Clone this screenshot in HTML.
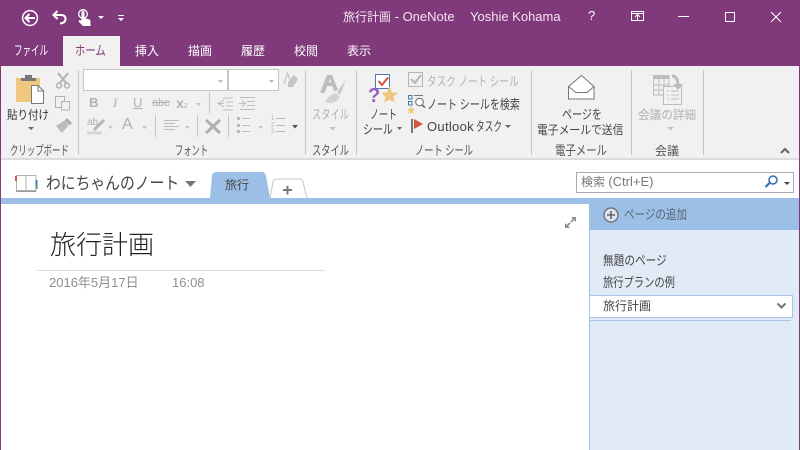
<!DOCTYPE html>
<html lang="ja"><head><meta charset="utf-8"><title>旅行計画 - OneNote</title>
<style>
html,body{margin:0;padding:0;width:800px;height:450px;overflow:hidden;background:#fff}
body{position:relative;font-family:"Liberation Sans","Noto Sans CJK JP",sans-serif;font-size:12px;color:#444}
.a{position:absolute;white-space:nowrap;line-height:16px;transform-origin:0 0}
.k{font-size:13px}
.b{position:absolute}
.w{color:#fff}
.g{color:#b1b1b1}
.tab{top:43px;color:#fff;font-size:12px}
.tab.k{font-size:13px}
.lbl{top:143px;color:#555;font-size:12px}
.lbl.k{font-size:13px}
.sep{position:absolute;top:70px;width:1px;height:85px;background:#c6c6c6}
svg{position:absolute;overflow:visible}
</style></head><body>
<div class="b" style="left:0;top:0;width:800px;height:66px;background:#80397b"></div>
<div class="b" style="left:0;top:66px;width:800px;height:93px;background:#f1f1f1"></div>
<div class="b" style="left:0;top:158px;width:800px;height:2px;background:#dcdcdc"></div>
<div class="b" style="left:0;top:0;width:1px;height:450px;background:#80397b"></div>
<div class="b" style="left:799px;top:0;width:1px;height:450px;background:#80397b"></div>
<div class="b" style="left:63px;top:36px;width:57px;height:30px;background:#f1f1f1"></div>

<svg style="left:0;top:0" width="140" height="36" fill="none" stroke="#fff">
<circle cx="30" cy="18" r="7.400" stroke-width="1.500"/>
<path d="M35 18H26M29.500 14L25.500 18L29.500 22" stroke-width="2"/>
<path d="M54 15H61Q65.500 15 65.500 19Q65.500 23 60 23.500M57.500 11L53.500 15L57.500 19" stroke-width="2"/>
<circle cx="83" cy="14" r="4.300" stroke-width="1.300"/>
<path d="M81.500 11.500Q83 10 84.500 11.500V18L89.500 19.500Q90.500 20 90.500 21.500V26H83L78.500 21.500L79.500 20L81.500 20.500Z" fill="#fff" stroke="none"/>
<path d="M98 16H104L101 19Z M118 15H124V16H118Z M118 18H124L121 21Z" fill="#fff" stroke="none"/>
</svg>

<div class="a" style="left:343px;top:9px;color:#f3e6f1">旅行計画<span style="font-size:13px"> - OneNote</span></div>
<div class="a" style="left:470px;top:9px;font-size:13px;color:#f3e6f1">Yoshie Kohama</div>
<div class="a w" style="left:588px;top:8px;font-size:13px">?</div>
<svg style="left:630px;top:8px" width="170" height="20" fill="none" stroke="#fff">
<path d="M1.500 3.500H13.500V12.500H1.500ZM1.500 5.500H13.500M7.500 12V7M5 9L7.500 6.500L10 9"/>
<path d="M48 8.500H59"/>
<path d="M95.500 4.500H104.500V13.500H95.500Z"/>
<path d="M141 4L151 14M151 4L141 14"/>
</svg>

<div class="a tab k" style="left:14px;transform:scaleX(.655)">ファイル</div>
<div class="a tab k" style="left:75px;color:#80397b;transform:scaleX(.795)">ホーム</div>
<div class="a tab" style="left:135px">挿入</div>
<div class="a tab" style="left:188px">描画</div>
<div class="a tab" style="left:241px">履歴</div>
<div class="a tab" style="left:294px">校閲</div>
<div class="a tab" style="left:347px">表示</div>

<!-- clipboard -->
<svg style="left:0;top:66px" width="110" height="95">
<rect x="16" y="12" width="24" height="24" fill="#efc77f"/>
<path d="M21 15V12H25V9H32V12H36V15Z" fill="#777"/>
<path d="M31.500 19.500H38L43.500 25V37.500H31.500Z" fill="#fff" stroke="#777"/>
<path d="M38 19.500V25H43.500" fill="none" stroke="#777"/>
<path d="M28 61H34L31 64Z" fill="#666"/>
<path d="M58 7L67 18M68 7L59 18" stroke="#b3b3b3" stroke-width="2"/>
<circle cx="59" cy="19.500" r="2.500" fill="none" stroke="#b3b3b3" stroke-width="1.500"/>
<circle cx="67" cy="19.500" r="2.500" fill="none" stroke="#b3b3b3" stroke-width="1.500"/>
<path d="M55.500 30.500H64.500V41.500H55.500Z" fill="#f1f1f1" stroke="#b3b3b3"/>
<path d="M61.500 35.500H69.500V44H61.500Z" fill="#f1f1f1" stroke="#b3b3b3"/>
<path d="M56 60L65 54L69 59L62 67Z" fill="#bdbdbd"/><path d="M66 53L71 58" stroke="#aaa" stroke-width="3"/>
</svg>
<div class="a" style="left:7px;top:107px;color:#333;transform:scaleX(.875)">貼り付け</div>
<div class="a lbl k" style="left:10px;transform:scaleX(.646)">クリップボード</div>
<div class="sep" style="left:78px"></div>

<!-- font -->
<div class="b" style="left:83px;top:69px;width:145px;height:22px;background:#fff;border:1px solid #c6c6c6;box-sizing:border-box"></div>
<div class="b" style="left:228px;top:69px;width:51px;height:22px;background:#fff;border:1px solid #c6c6c6;box-sizing:border-box"></div>
<svg style="left:0;top:0" width="310" height="160" fill="none" stroke="#bcbcbc">
<path d="M218 80H223L220.500 83ZM269 80H274L271.500 83Z" fill="#bcbcbc" stroke="none"/>
<path d="M288 82L294 75L298 79L293 87H288Z" fill="#c4c4c4" stroke="none"/>
<path d="M284 84L287.500 73L290 80" stroke="#bdbdbd"/>
<path d="M196 103H201L198.500 106Z" fill="#c4c4c4" stroke="none"/>
<rect x="209" y="92" width="1" height="21" fill="#c6c6c6" stroke="none"/>
<path d="M223 98H233M226 102H233M226 106H233M223 110H233M224 100L218 103.500L224 107M218 103.500H224"/>
<path d="M240 97.500H255M247 101.500H255M247 105.500H255M240 109.500H255M239 103.500H245M242 100.500L245.500 103.500L242 106.500"/>
<path d="M87 133H102" stroke="#d6d6d6" stroke-width="3"/>
<path d="M94 130L104 120" stroke="#b5b5b5" stroke-width="3"/>
<path d="M108 126H113L110.500 129ZM142 126H147L144.500 129ZM185 126H190L187.500 129ZM258 126H263L260.500 129Z" fill="#c4c4c4" stroke="none"/>
<path d="M164 120.500H179M164 123.500H175M164 126.500H179M164 129.500H175"/>
<rect x="155" y="115" width="1" height="22" fill="#c6c6c6" stroke="none"/>
<rect x="197" y="115" width="1" height="22" fill="#c6c6c6" stroke="none"/>
<rect x="228" y="115" width="1" height="22" fill="#c6c6c6" stroke="none"/>
<path d="M206 120L220 133M220 120L206 133" stroke="#b0b0b0" stroke-width="3"/>
<path d="M237 117H240V120H237ZM237 124H240V127H237ZM237 130H240V133H237Z" fill="#bbb" stroke="none"/>
<path d="M242 118.500H250M242 125.500H250M242 131.500H250"/>
<path d="M276 118.500H285M276 125.500H285M276 131.500H285"/>
<path d="M292 125H298L295 128.500Z" fill="#555" stroke="none"/>
</svg>
<div class="a g" style="left:89px;top:95px;font-weight:bold;font-size:13px">B</div>
<div class="a g" style="left:113px;top:95px;font-size:13px;font-style:italic;font-family:'Liberation Serif',serif">I</div>
<div class="a g" style="left:133px;top:95px;font-size:13px;text-decoration:underline">U</div>
<div class="a g" style="left:152px;top:95px;font-size:11px;text-decoration:line-through">abc</div>
<div class="a g" style="left:176px;top:95px;font-size:14px;font-weight:bold">x<span style="font-size:7px;font-weight:normal">2</span></div>
<div class="a g" style="left:87px;top:115px;font-size:10px">ab</div>
<div class="a g" style="left:122px;top:117px;font-size:16px">A</div>
<div class="a g" style="left:271px;top:116px;font-size:6px;line-height:6.500px;white-space:pre-line">1
2
3</div>
<div class="a lbl k" style="left:175px;transform:scaleX(.637)">フォント</div>
<div class="sep" style="left:305px"></div>

<!-- style -->
<svg style="left:318px;top:72px" width="32" height="35">
<path d="M2 21L9 3H14L20 18L16 19L14.500 14H9L6.500 21ZM10.500 10.500H13.300L12 6.500Z" fill="#bdbdbd" fill-rule="evenodd"/>
<path d="M28 8L19 20L22 23Z" fill="#c9c9c9"/>
<path d="M18 21Q12 22 7 30Q18 33 22 25Z" fill="#d2d2d2"/>
</svg>
<div class="a g k" style="left:312px;top:107px;transform:scaleX(.71)">スタイル</div>
<svg style="left:329px;top:127px" width="10" height="6"><path d="M0 0H7L3.500 3.500Z" fill="#c4c4c4"/></svg>
<div class="a lbl k" style="left:312px;transform:scaleX(.71)">スタイル</div>
<div class="sep" style="left:356px"></div>

<!-- note tags -->
<svg style="left:365px;top:72px" width="40" height="34">
<rect x="10.500" y="2.500" width="14" height="14" fill="#fff" stroke="#4b79b0"/>
<path d="M13.500 9L17 13L23 5.500" fill="none" stroke="#d2543a" stroke-width="2"/>
<text x="3" y="30" font-family="Liberation Sans" font-size="20" font-weight="bold" fill="#9a5fbd">?</text>
<path d="M24.500 14L27 20.500H33L28.500 25L30 30.500L24.500 27.500L19 30.500L20.500 25L16 20.500H22Z" fill="#efc77f"/>
</svg>
<div class="a k" style="left:370px;top:107px;transform:scaleX(.69)">ノート</div>
<div class="a k" style="left:363px;top:122px;transform:scaleX(.765)">シール</div>
<svg style="left:397px;top:127px" width="8" height="5"><path d="M0 0H5L2.500 3Z" fill="#666"/></svg>
<svg style="left:408px;top:72px" width="20" height="70">
<rect x="0.500" y="0.500" width="14" height="14" fill="none" stroke="#b5b5b5"/>
<path d="M3 7L7 11L13 3" fill="none" stroke="#b5b5b5" stroke-width="2"/>
<rect x="0.500" y="23.500" width="3.500" height="3.500" fill="none" stroke="#4b79b0"/>
<rect x="0.500" y="29.500" width="3.500" height="3.500" fill="none" stroke="#4b79b0"/>
<path d="M3 34L4.500 37H7L5 39L6 42L3 40.500L0 42L1 39L-1 37H1.500Z" fill="#efc77f"/>
<path d="M6 23.500H15" stroke="#777"/>
<circle cx="11.500" cy="30" r="3.800" fill="#fff" stroke="#666"/>
<path d="M14 33L17 35.500" stroke="#666" stroke-width="1.500"/>
<rect x="3" y="47" width="2" height="14" fill="#777"/>
<path d="M6 47L15 52L6 57Z" fill="#d2543a"/>
</svg>
<div class="a g k" style="left:427px;top:74px;transform:scaleX(.738)">タスク ノート シール</div>
<div class="a k" style="left:427px;top:97px;transform:scaleX(.77)">ノート シールを検索</div>
<div class="a" style="left:427px;top:119px;font-size:13px;letter-spacing:.3px">Outlook</div>
<div class="a k" style="left:476px;top:119px;transform:scaleX(.667)">タスク</div>
<svg style="left:505px;top:125px" width="8" height="5"><path d="M0 0H6L3 3Z" fill="#666"/></svg>
<div class="a lbl k" style="left:415px;transform:scaleX(.71)">ノート シール</div>
<div class="sep" style="left:531px"></div>

<!-- email -->
<svg style="left:566px;top:74px" width="30" height="28" fill="#fff" stroke="#777">
<path d="M2.500 12.500L15.500 1.500L28 12.500V25H2.500Z"/>
<path d="M2.500 12.500L10 18.500H21L28 12.500" fill="none"/>
</svg>
<div class="a k" style="left:562px;top:107px;transform:scaleX(.77)">ページを</div>
<div class="a" style="left:537px;top:122px;transform:scaleX(.9)">電子メールで送信</div>
<div class="a lbl k" style="left:555px;transform:scaleX(.8)">電子メール</div>
<div class="sep" style="left:631px"></div>

<!-- meeting -->
<svg style="left:651px;top:73px" width="36" height="32" fill="none" stroke="#bdbdbd">
<path d="M2.500 2.500H18V22H2.500Z" fill="#f1f1f1"/><path d="M2 4H18" stroke-width="4"/>
<path d="M2 12H18M2 17H18M8 6V22M13 6V22"/>
<path d="M12.500 13.500H30.500V31.500H12.500Z" fill="#f1f1f1"/>
<path d="M16 18H18M20 18H28M16 22H18M20 22H28M16 26H18M20 26H28"/>
<path d="M21 3Q27 3 27 13" stroke-width="3"/><path d="M22 11H32L27 17Z" fill="#bdbdbd" stroke="none"/>
</svg>
<div class="a g" style="left:638px;top:107px;transform:scaleX(.97)">会議の詳細</div>
<svg style="left:667px;top:127px" width="10" height="6"><path d="M0 0H7L3.500 3.500Z" fill="#c4c4c4"/></svg>
<div class="a lbl" style="left:655px">会議</div>
<div class="sep" style="left:703px"></div>
<svg style="left:780px;top:147px" width="12" height="8"><path d="M1 6L5 2L9 6" fill="none" stroke="#666" stroke-width="2"/></svg>

<!-- notebook bar -->
<svg style="left:15px;top:174px" width="24" height="20" fill="none">
<path d="M1.500 1.500H11V16.500H1.500Z M11 1.500H21V16.500H11Z" stroke="#b0b0b0" fill="#fff"/>
<path d="M1 17.500H21" stroke="#999"/>
<rect x="0" y="2" width="2" height="5" fill="#d2543a"/>
<rect x="20.500" y="6" width="2" height="5" fill="#4b79b0"/>
<rect x="20.500" y="11" width="2" height="4" fill="#5a9a5a"/>
</svg>
<div class="a" style="left:46px;top:172px;font-size:17px;line-height:24px;color:#444;transform:scaleX(.87)">わにちゃんのノート</div>
<svg style="left:185px;top:181px" width="12" height="8"><path d="M0 0H11L5.500 6Z" fill="#777"/></svg>
<svg style="left:205px;top:170px" width="110" height="30">
<path d="M5 28L7 6Q7.500 2 12 2H57Q60 2 61 6L65 28Z" fill="#9bbfe6"/>
<path d="M65 28L68 12Q69 9 72 9H95Q97 9 98 12L102 28" fill="#fff" stroke="#c6c6c6"/>
<path d="M78 20H87M82.500 16V24.500" stroke="#777" stroke-width="2"/>
</svg>
<div class="a" style="left:225px;top:177px;color:#444">旅行</div>
<div class="b" style="left:576px;top:172px;width:218px;height:21px;background:#fff;border:1px solid #ababab;box-sizing:border-box"></div>
<div class="a" style="left:581px;top:174px;color:#777">検索 <span style="font-size:13px">(Ctrl+E)</span></div>
<svg style="left:764px;top:174px" width="28" height="16" fill="none">
<circle cx="9" cy="6" r="4" stroke="#3b6fb0" stroke-width="1.600"/>
<path d="M5.500 9L1.500 13" stroke="#3b6fb0" stroke-width="2.200"/>
<path d="M20 8H26L23 11Z" fill="#444"/>
</svg>

<div class="b" style="left:1px;top:198px;width:798px;height:6px;background:#9bbfe6"></div>

<!-- page -->
<div class="a" style="left:50px;top:227px;font-size:26px;line-height:36px;color:#222;font-weight:300">旅行計画</div>
<div class="b" style="left:37px;top:270px;width:288px;height:1px;background:#dcdcdc"></div>
<div class="a" style="left:49px;top:275px;font-size:13px;color:#8f8f8f">2016年5月17日</div>
<div class="a" style="left:172px;top:275px;font-size:13px;color:#8f8f8f">16:08</div>
<svg style="left:564px;top:216px" width="13" height="13" fill="#8f8f8f">
<path d="M6 7L2 11M7 6L11 2" stroke="#8f8f8f" stroke-width="1.600"/>
<path d="M1 7V12H6ZM7 1H12V6Z"/>
</svg>

<!-- right pane -->
<div class="b" style="left:589px;top:204px;width:210px;height:246px;background:#e1ebf6;border-left:1px solid #9bbfe6;box-sizing:border-box"></div>
<div class="b" style="left:589px;top:204px;width:210px;height:26px;background:#9bbfe6"></div>
<svg style="left:603px;top:207px" width="18" height="18" fill="none">
<circle cx="8" cy="8" r="7" fill="#d8e4f2" stroke="#666" stroke-width="1.200"/>
<path d="M4 8H12M8 4V12" stroke="#666" stroke-width="1.600"/>
</svg>
<div class="a k" style="left:624px;top:207px;color:#5a6674;transform:scaleX(.81)">ページの追加</div>
<div class="a k" style="left:603px;top:253px;color:#444;transform:scaleX(.82)">無題のページ</div>
<div class="a k" style="left:603px;top:275px;color:#444;transform:scaleX(.79)">旅行プランの例</div>
<div class="b" style="left:590px;top:320px;width:201px;height:1px;background:#a9c6e8"></div>
<div class="b" style="left:589px;top:295px;width:204px;height:23px;background:#fff;border:1px solid #a9c6e8;box-sizing:border-box"></div>
<div class="a" style="left:603px;top:298px;color:#444">旅行計画</div>
<svg style="left:776px;top:302px" width="12" height="9"><path d="M1.500 1.500L5.500 5.500L9.500 1.500" fill="none" stroke="#777" stroke-width="2"/></svg>
</body></html>
